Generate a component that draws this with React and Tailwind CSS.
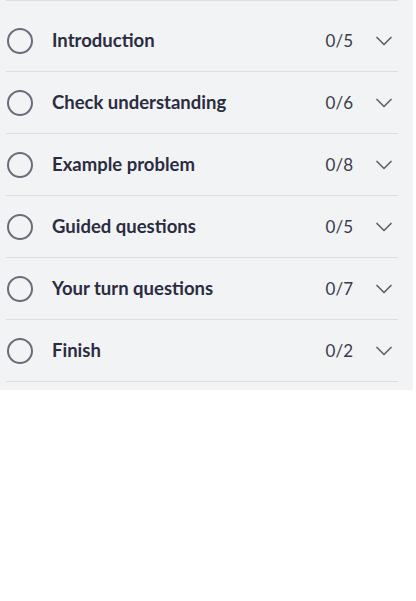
import { ChevronDown } from "lucide-react";

const sections = [
  { title: "Introduction", done: 0, total: 5 },
  { title: "Check understanding", done: 0, total: 6 },
  { title: "Example problem", done: 0, total: 8 },
  { title: "Guided questions", done: 0, total: 5 },
  { title: "Your turn questions", done: 0, total: 7 },
  { title: "Finish", done: 0, total: 2 },
];

function SectionRow({ title, done, total }) {
  return (
    <li className="flex h-[62px] items-center border-b border-[#dcdde2]">
      <span className="ml-px h-[26px] w-[26px] shrink-0 rounded-full border-2 border-[#6b6c7a]" />
      <span className="ml-[19px] flex-1 text-[18.5px] font-bold text-[#2b2c40]">{title}</span>
      <span className="text-[17px] text-[#3a3b4c]">
        {done}/{total}
      </span>
      <ChevronDown className="ml-[17px] h-[28px] w-[28px] text-[#62636f]" strokeWidth={1.5} />
    </li>
  );
}

export default function App() {
  return (
    <div className="w-[413px] bg-[#f2f3f5] pb-2 pl-[6px] pr-[15px]" style={{ fontFamily: "Lato, 'Noto Sans', sans-serif" }}>
      <ul className="border-t border-[#dcdde2] pt-[9px]">
        {sections.map((s) => (
          <SectionRow key={s.title} {...s} />
        ))}
      </ul>
    </div>
  );
}
